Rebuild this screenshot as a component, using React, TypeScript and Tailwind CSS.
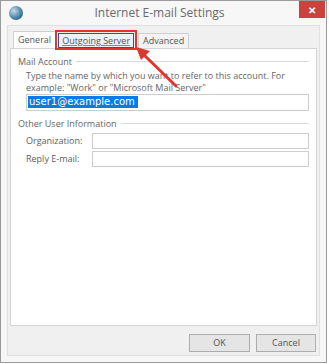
import React from 'react';

const font = { fontFamily: '"Open Sans", "Noto Sans", sans-serif' };

const Field: React.FC<{ label: string }> = ({ label }) => (
  <div className="flex items-center h-[18px]">
    <span className="w-[66px] text-[9px] text-[#5c5c5c]">{label}</span>
    <div className="flex-1 h-[16px] border border-[#cdcdcd] bg-white" />
  </div>
);

const GroupTitle: React.FC<{ title: string }> = ({ title }) => (
  <div className="flex items-center gap-[4px]">
    <span className="text-[9px] text-[#666]">{title}</span>
    <div className="flex-1 h-px bg-[#dcdcdc]" />
  </div>
);

export default function App() {
  return (
    <div className="w-[329px] h-[364px] bg-white relative overflow-hidden" style={font}>
      {/* window */}
      <div className="w-[327px] h-[363px] border border-[#9a9a9a] bg-[#f7f7f7] flex flex-col">
        {/* title bar */}
        <div className="h-[24px] flex items-start relative">
          <div className="w-[14px] h-[14px] rounded-full mt-[5px] ml-[8px] bg-[radial-gradient(circle_at_35%_35%,#c9dde8,#3f7fa0_60%,#1d4a63)]" />
          <div className="flex-1 text-center text-[12px] text-[#6a6a6a] pt-[3px] pr-[30px]">
            Internet E-mail Settings
          </div>
          <div className="absolute right-[1px] top-0 w-[26px] h-[17px] bg-[#c9433c] flex items-center justify-center">
            <span className="text-white text-[10px] leading-none font-bold">✕</span>
          </div>
        </div>

        {/* client area */}
        <div className="flex-1 mx-[6px] mb-[6px] border border-[#e0e0e0] bg-[#f0f0f0] flex flex-col px-[2px] pt-[5px]">
          {/* tabs */}
          <div className="flex items-end h-[17px] pl-[3px]">
            <div className="h-[17px] px-[4px] bg-white border border-b-0 border-[#cfcfcf] text-[9px] text-[#555] flex items-center">
              General
            </div>
            <div className="relative ml-[2px] h-[15px] px-[3px] bg-[#eef0f6] border border-[#3a4ca0] text-[9px] text-[#555] flex items-center underline decoration-[#888]">
              Outgoing Server
              <div className="absolute -left-[4px] -top-[4px] -right-[4px] -bottom-[3px] border-2 border-[#e0352e]" />
            </div>
            <div className="ml-[4px] h-[15px] px-[4px] bg-[#f3f3f3] border border-b-0 border-[#cfcfcf] text-[9px] text-[#555] flex items-center">
              Advanced
            </div>
          </div>

          {/* panel */}
          <div className="h-[278px] bg-white border border-[#d4d4d4] flex flex-col px-[7px] pt-[6px]">
            <GroupTitle title="Mail Account" />
            <div className="pl-[8px] flex flex-col">
              <p className="text-[9px] leading-[12px] text-[#666] mt-[1px]">
                Type the name by which you want to refer to this account. For
                <br />
                example: "Work" or "Microsoft Mail Server"
              </p>
              <div className="h-[17px] border border-[#cdcdcd] bg-white flex items-center pl-[1px]">
                <span
                  className="bg-[#0a7ae6] text-white leading-[12px] px-[1px] w-[110px]"
                  style={{ fontFamily: '"DejaVu Sans", sans-serif', fontSize: '10px' }}
                >
                  user1@example.com
                </span>
              </div>
            </div>
            <div className="mt-[6px]">
              <GroupTitle title="Other User Information" />
            </div>
            <div className="pl-[8px] flex flex-col mt-[2px]">
              <Field label="Organization:" />
              <Field label="Reply E-mail:" />
            </div>
          </div>

          {/* buttons */}
          <div className="flex justify-end gap-[6px] mt-[8px] pr-[1px]">
            <div className="w-[61px] h-[18px] bg-[#e5e5e5] border border-[#adadad] text-[9px] text-[#555] flex items-center justify-center">
              OK
            </div>
            <div className="w-[60px] h-[18px] bg-[#e5e5e5] border border-[#adadad] text-[9px] text-[#555] flex items-center justify-center">
              Cancel
            </div>
          </div>
        </div>
      </div>

      {/* red arrow overlay */}
      <svg className="absolute left-0 top-0 pointer-events-none" width="329" height="364">
        <line x1="176" y1="86" x2="143" y2="54" stroke="#e0352e" strokeWidth="3" strokeLinecap="round" />
        <polygon points="136,47 150,51 141,60" fill="#e0352e" />
      </svg>
    </div>
  );
}
